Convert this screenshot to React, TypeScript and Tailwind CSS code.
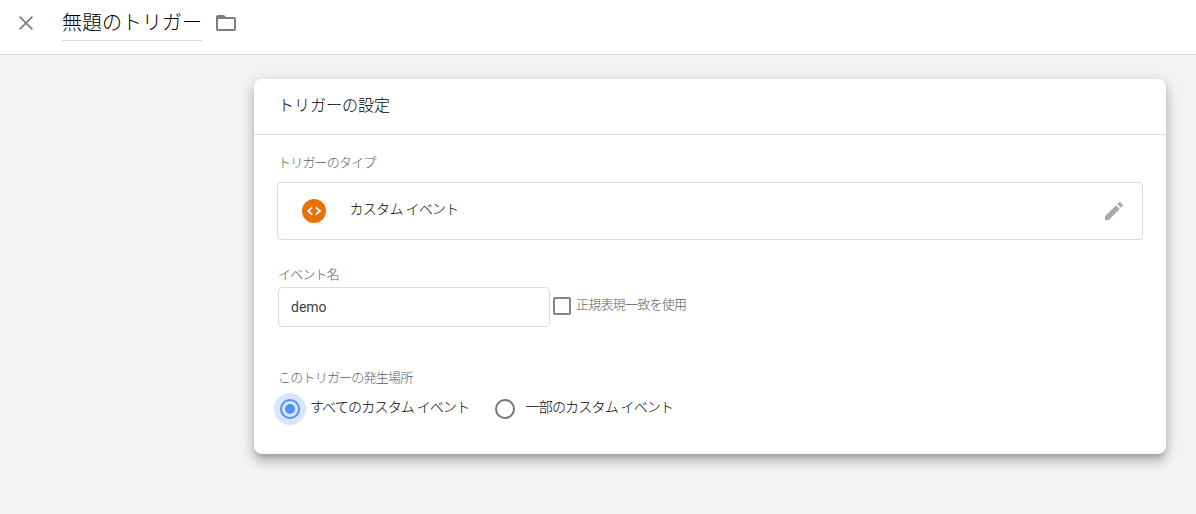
import { useState } from 'react';

function CloseIcon() {
  return (
    <svg viewBox="0 0 24 24" className="size-6" fill="#7d7d7d">
      <path d="M19 6.2 17.8 5 12 10.8 6.2 5 5 6.2 10.8 12 5 17.8 6.2 19 12 13.2 17.8 19 19 17.8 13.2 12z" />
    </svg>
  );
}

function FolderIcon() {
  return (
    <svg viewBox="0 0 24 24" className="size-6" fill="#7d7d7d">
      <path d="M20 6h-8l-2-2H4c-1.1 0-1.99.9-1.99 2L2 18c0 1.1.9 2 2 2h16c1.1 0 2-.9 2-2V8c0-1.1-.9-2-2-2zm0 12H4V8h16v10z" />
    </svg>
  );
}

function CodeIcon() {
  return (
    <svg viewBox="0 0 24 24" className="size-6">
      <circle cx="12" cy="12" r="12" fill="#e8710a" />
      <path d="M10.2 8.4 6.1 12l4.1 3.6M13.8 8.4l4.1 3.6-4.1 3.6" fill="none" stroke="#fff" strokeWidth="1.8" />
    </svg>
  );
}

function PencilIcon() {
  return (
    <svg viewBox="0 0 24 24" className="size-6" fill="#a9a9a9">
      <path d="M3 17.25V21h3.75L17.81 9.94l-3.75-3.75L3 17.25zM20.71 7.04a.996.996 0 0 0 0-1.41l-2.34-2.34a.996.996 0 0 0-1.41 0l-1.83 1.83 3.75 3.75 1.83-1.83z" />
    </svg>
  );
}

function Radio({ label, checked, onSelect }: { label: string; checked: boolean; onSelect: () => void }) {
  return (
    <button type="button" role="radio" aria-checked={checked} onClick={onSelect} className="flex h-8 items-center">
      <span className={checked ? 'flex size-8 items-center justify-center rounded-full bg-[#d8e6fd]' : 'flex size-8 items-center justify-center rounded-full'}>
        <span className={checked ? 'flex size-5 items-center justify-center rounded-full border-2 border-[#5191f6]' : 'size-5 rounded-full border-2 border-[#757575]'}>
          {checked && <span className="size-2.5 rounded-full bg-[#5191f6]" />}
        </span>
      </span>
      <span className="ml-1 -mt-[5px] text-[14px] leading-5 tracking-[-0.8px] whitespace-nowrap text-[#000]">{label}</span>
    </button>
  );
}

export default function App() {
  const [scope, setScope] = useState('all');
  return (
    <div className="flex h-[514px] flex-col overflow-hidden bg-[#f1f3f4] font-['Roboto','Noto_Sans_CJK_JP',sans-serif] font-light text-[#000]">
      <header className="flex h-[55px] shrink-0 items-start border-b border-[#dadce0] bg-white pl-[14px]">
        <button type="button" aria-label="閉じる" className="mt-[11px]"><CloseIcon /></button>
        <h1 className="ml-6 h-[41px] border-b border-[#dadce0] pt-[8px] text-[20px] leading-[30px] whitespace-nowrap">無題のトリガー</h1>
        <button type="button" aria-label="フォルダ" className="mt-[11px] ml-3"><FolderIcon /></button>
      </header>
      <main className="flex-1 pt-6 pl-[254px]">
        <section className="h-[375px] w-[912px] rounded-lg bg-white shadow-[0_5px_5px_-3px_rgba(0,0,0,0.2),0_8px_10px_1px_rgba(0,0,0,0.14),0_3px_14px_2px_rgba(0,0,0,0.12)]">
          <h2 className="h-14 border-b border-[#dadce0] pt-[15px] pl-6 text-[16px] leading-6">トリガーの設定</h2>
          <div className="flex flex-col pt-[19px] pr-[23px] pl-6 text-[13px] leading-[18px]">
            <div className="tracking-[-0.8px] text-[#5c5c5c]">トリガーのタイプ</div>
            <div className="-ml-px mt-[10px] flex h-[58px] items-center rounded border border-[#dadce0] pr-4 pl-6">
              <CodeIcon />
              <span className="-mt-[5px] ml-[23.5px] flex-1 text-[14px] leading-5 tracking-[-0.7px]">カスタム イベント</span>
              <PencilIcon />
            </div>
            <label htmlFor="event" className="mt-[26px] tracking-[-0.8px] text-[#5c5c5c]">イベント名</label>
            <div className="mt-[3px] flex h-10 items-center">
              <input id="event" defaultValue="demo" className="h-10 w-[272px] rounded border border-[#dadce0] px-3 text-[14px] font-normal text-[#3c4043] outline-none" />
              <span className="ml-[3px] -mt-[2px] size-[18px] rounded-xs border-2 border-[#80868b]" />
              <span className="-mt-[4px] ml-[5px] tracking-[-0.75px] text-[#5c5c5c]">正規表現一致を使用</span>
            </div>
            <div className="mt-[42px] tracking-[-0.78px] text-[#5c5c5c]">このトリガーの発生場所</div>
            <div role="radiogroup" className="-ml-1 mt-[6px] flex gap-5">
              <Radio label="すべてのカスタム イベント" checked={scope === 'all'} onSelect={() => setScope('all')} />
              <Radio label="一部のカスタム イベント" checked={scope === 'some'} onSelect={() => setScope('some')} />
            </div>
          </div>
        </section>
      </main>
    </div>
  );
}
